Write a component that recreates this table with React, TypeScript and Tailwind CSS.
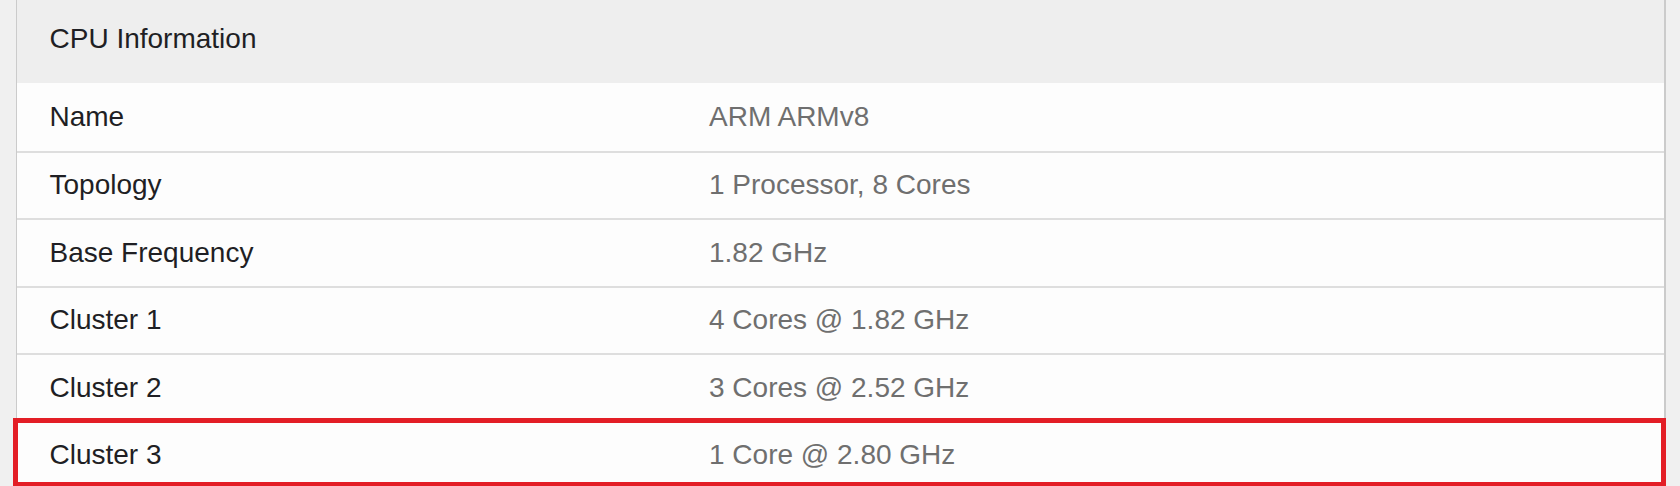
const rows = [
    { label: "Name", value: "ARM ARMv8" },
    { label: "Topology", value: "1 Processor, 8 Cores" },
    { label: "Base Frequency", value: "1.82 GHz" },
    { label: "Cluster 1", value: "4 Cores @ 1.82 GHz" },
    { label: "Cluster 2", value: "3 Cores @ 2.52 GHz" },
    { label: "Cluster 3", value: "1 Core @ 2.80 GHz", highlight: true },
]

export default function App() {
    return (
        <div className="min-h-screen bg-[#f0f0f0] pl-[16px] pr-[14px] font-['Liberation_Sans',Arial,sans-serif] text-[28px] leading-[1.15]">
            <div className="flex flex-col border-l border-r-2 border-[#cbcbcb] bg-[#fdfdfd]">
                <div className="flex h-[83px] items-center bg-[#eeeeee] pb-[4px] pl-[32.5px] text-[#1f1f24]">
                    CPU Information
                </div>
                {rows.map((row, i) => (
                    <div
                        key={row.label}
                        className={`relative grid h-[67.5px] grid-cols-[660px_1fr] items-center ${i > 0 ? "border-t-2 border-[#dedede]" : ""}`}
                    >
                        <div className="pl-[32.5px] text-[#1f1f24]">{row.label}</div>
                        <div className="pl-[32px] text-[#6f6f6f]">{row.value}</div>
                        {row.highlight && (
                            <div className="pointer-events-none absolute top-[-5px] left-[-4px] right-[-2px] h-[69px] border-[5px] border-[#e31e26]" />
                        )}
                    </div>
                ))}
            </div>
        </div>
    )
}
